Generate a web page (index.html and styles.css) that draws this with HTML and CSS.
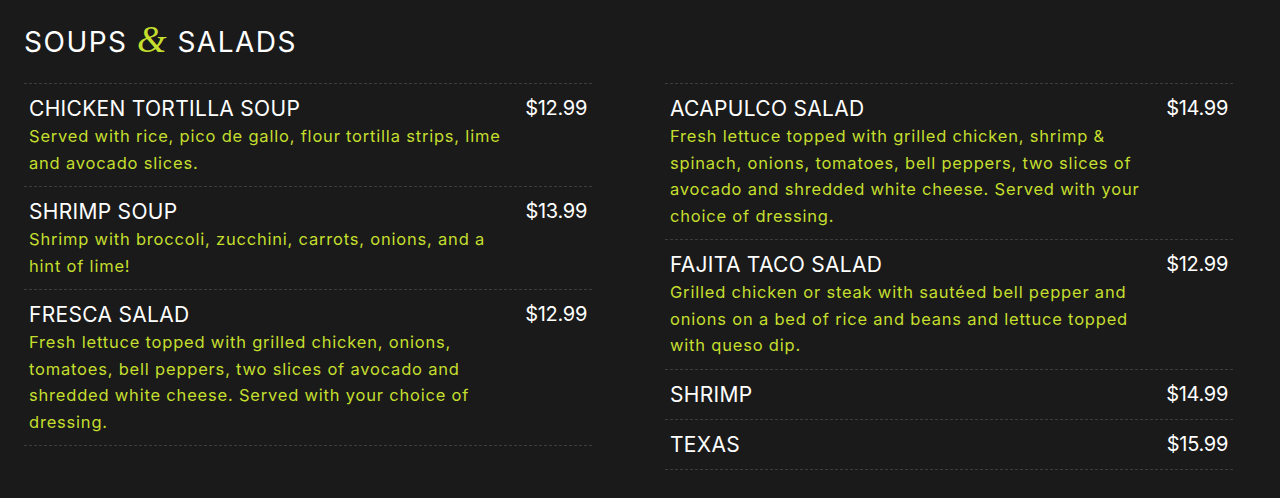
FILE: index.html
```html
<!DOCTYPE html>
<html>
<head>
<meta charset="utf-8">
<link rel="stylesheet" href="styles.css">
</head>
<body>
<section class="menu">
  <h2 class="title">SOUPS <span class="amp">&amp;</span> SALADS</h2>
  <div class="cols">
    <div class="col">
      <div class="item">
        <div class="info">
          <div class="name">CHICKEN TORTILLA SOUP</div>
          <div class="desc">Served with rice, pico de gallo, flour tortilla strips, lime and avocado slices.</div>
        </div>
        <div class="price">$12.99</div>
      </div>
      <div class="item">
        <div class="info">
          <div class="name">SHRIMP SOUP</div>
          <div class="desc">Shrimp with broccoli, zucchini, carrots, onions, and a hint of lime!</div>
        </div>
        <div class="price">$13.99</div>
      </div>
      <div class="item">
        <div class="info">
          <div class="name">FRESCA SALAD</div>
          <div class="desc">Fresh lettuce topped with grilled chicken, onions, tomatoes, bell peppers, two slices of avocado and shredded white cheese. Served with your choice of dressing.</div>
        </div>
        <div class="price">$12.99</div>
      </div>
    </div>
    <div class="col">
      <div class="item">
        <div class="info">
          <div class="name">ACAPULCO SALAD</div>
          <div class="desc">Fresh lettuce topped with grilled chicken, shrimp &amp; spinach, onions, tomatoes, bell peppers, two slices of avocado and shredded white cheese. Served with your choice of dressing.</div>
        </div>
        <div class="price">$14.99</div>
      </div>
      <div class="item">
        <div class="info">
          <div class="name">FAJITA TACO SALAD</div>
          <div class="desc">Grilled chicken or steak with sautéed bell pepper and onions on a bed of rice and beans and lettuce topped with queso dip.</div>
        </div>
        <div class="price">$12.99</div>
      </div>
      <div class="item">
        <div class="info">
          <div class="name">SHRIMP</div>
        </div>
        <div class="price">$14.99</div>
      </div>
      <div class="item">
        <div class="info">
          <div class="name">TEXAS</div>
        </div>
        <div class="price">$15.99</div>
      </div>
    </div>
  </div>
</section>
</body>
</html>
```

FILE: styles.css
```css
html, body {
  margin: 0;
  padding: 0;
  background: #1a1a1a;
}
body {
  font-family: Inter, "Open Sans", sans-serif;
  color: #ffffff;
}
.menu {
  padding: 24px 24px 0 24px;
}
.title {
  margin: 0 0 23px 0;
  font-size: 28px;
  font-weight: 400;
  line-height: 36px;
  letter-spacing: 1.5px;
}
.amp {
  font-family: "Liberation Serif", serif;
  font-style: italic;
  color: #c5df2e;
  font-size: 38px;
  line-height: 30px;
}
.cols {
  display: flex;
  gap: 73px;
}
.col {
  width: 568px;
}
.item {
  display: flex;
  justify-content: space-between;
  align-items: flex-start;
  border-top: 1px dashed #3c3c3c;
  padding: 10px 5px;
}
.col .item:last-child {
  border-bottom: 1px dashed #3c3c3c;
}
.info {
  width: 478px;
}
.name {
  font-size: 21px;
  line-height: 29px;
  letter-spacing: 0.3px;
}
.desc {
  color: #c5df2e;
  font-size: 16.5px;
  line-height: 26.5px;
  letter-spacing: 0.8px;
}
.price {
  font-size: 20px;
  line-height: 29px;
  letter-spacing: -0.3px;
}
```
